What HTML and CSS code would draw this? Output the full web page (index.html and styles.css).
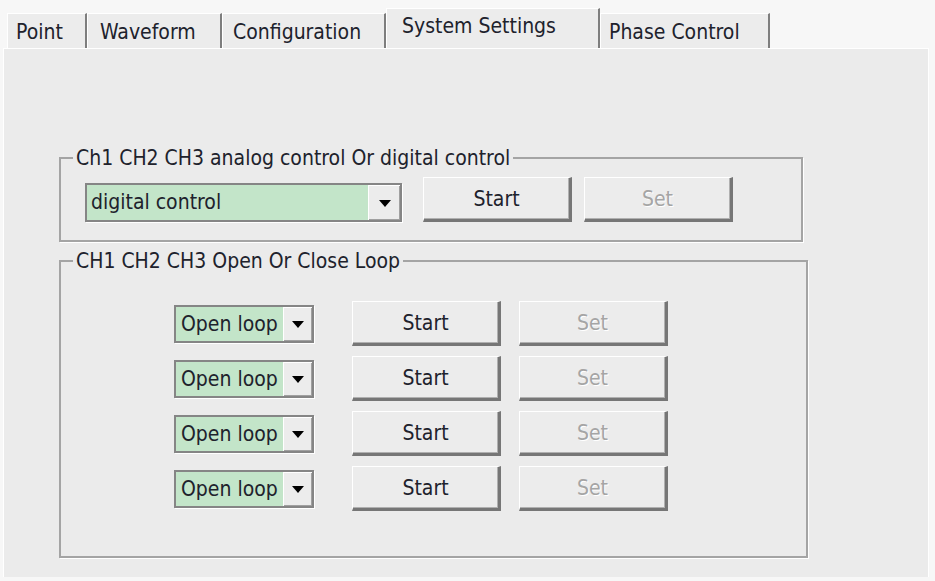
FILE: index.html
```
<!DOCTYPE html>
<html lang="en">

<head>
    <meta charset="UTF-8">
    <title>System Settings</title>
    <link rel="stylesheet" href="styles.css">
</head>

<body>
    <div class="window">
        <div class="tabs">
            <div class="tab tab-point">Point</div>
            <div class="tab tab-wave">Waveform</div>
            <div class="tab tab-config">Configuration</div>
            <div class="tab tab-system active">System Settings</div>
            <div class="tab tab-phase">Phase Control</div>
        </div>

        <div class="panel">
            <fieldset class="group group-mode">
                <legend>Ch1 CH2 CH3 analog control Or digital control</legend>
                <div class="mode-row">
                    <div class="combo combo-wide">
                        <span class="combo-text">digital control</span>
                        <span class="drop"><svg width="12" height="7" viewBox="0 0 12 7"><path d="M0 0H12L6 7Z" fill="#000"/></svg></span>
                    </div>
                    <button class="btn btn-start">Start</button>
                    <button class="btn" disabled>Set</button>
                </div>
            </fieldset>

            <fieldset class="group group-loop">
                <legend>CH1 CH2 CH3 Open Or Close Loop</legend>
                <div class="loop-list">
                    <div class="loop-row">
                        <div class="combo combo-small">
                            <span class="combo-text">Open loop</span>
                            <span class="drop"><svg width="12" height="7" viewBox="0 0 12 7"><path d="M0 0H12L6 7Z" fill="#000"/></svg></span>
                        </div>
                        <button class="btn btn-start">Start</button>
                        <button class="btn" disabled>Set</button>
                    </div>
                    <div class="loop-row">
                        <div class="combo combo-small">
                            <span class="combo-text">Open loop</span>
                            <span class="drop"><svg width="12" height="7" viewBox="0 0 12 7"><path d="M0 0H12L6 7Z" fill="#000"/></svg></span>
                        </div>
                        <button class="btn btn-start">Start</button>
                        <button class="btn" disabled>Set</button>
                    </div>
                    <div class="loop-row">
                        <div class="combo combo-small">
                            <span class="combo-text">Open loop</span>
                            <span class="drop"><svg width="12" height="7" viewBox="0 0 12 7"><path d="M0 0H12L6 7Z" fill="#000"/></svg></span>
                        </div>
                        <button class="btn btn-start">Start</button>
                        <button class="btn" disabled>Set</button>
                    </div>
                    <div class="loop-row">
                        <div class="combo combo-small">
                            <span class="combo-text">Open loop</span>
                            <span class="drop"><svg width="12" height="7" viewBox="0 0 12 7"><path d="M0 0H12L6 7Z" fill="#000"/></svg></span>
                        </div>
                        <button class="btn btn-start">Start</button>
                        <button class="btn" disabled>Set</button>
                    </div>
                </div>
            </fieldset>
        </div>
    </div>
</body>

</html>
```
FILE: styles.css
```
body {
    margin: 0;
    background-color: #f7f7f7;
    font-family: "DejaVu Sans Condensed", "DejaVu Sans", sans-serif;
    font-size: 21px;
    color: #20222c;
}

.window {
    padding: 8px 0 0 3px;
}

/* tab strip */
.tabs {
    display: flex;
    align-items: flex-end;
    height: 40px;
    padding-left: 4px;
}

.tab {
    height: 35px;
    box-sizing: border-box;
    padding-left: 8px;
    line-height: 36px;
    white-space: nowrap;
    background-color: #ececec;
    border-top: 1px solid #fff;
    border-left: 1px solid #fff;
    border-right: 2px solid #7e7e7e;
}

.tab.active {
    height: 40px;
    line-height: 34px;
    padding-left: 15px;
}

.tab-point { width: 80px; }
.tab-wave { width: 135px; padding-left: 12px; }
.tab-config { width: 164px; padding-left: 10px; }
.tab-system { width: 214px; }
.tab-phase { width: 170px; padding-left: 8px; }

/* main page */
.panel {
    width: 926px;
    height: 529px;
    box-sizing: border-box;
    padding: 97px 0 0 55px;
    background-color: #ebebeb;
    border-top: 1px solid #fff;
    border-left: 1px solid #fff;
    border-right: 1px solid #fff;
}

.group {
    margin: 0;
    padding: 0;
    min-width: 0;
    box-sizing: border-box;
    border: 2px solid #a4a4a4;
    box-shadow: 1px 1px 0 #fff;
}

.group legend {
    margin-left: 12px;
    padding: 0 3px;
    line-height: 24px;
}

.group-mode {
    width: 744px;
}

.group-loop {
    width: 749px;
    margin-top: 7px;
}

.mode-row,
.loop-row {
    display: flex;
    align-items: center;
}

.mode-row {
    padding: 7px 0 18px 24px;
}

.loop-list {
    display: flex;
    flex-direction: column;
    gap: 10px;
    padding: 28px 0 45px 113px;
}

/* combo boxes */
.combo {
    display: flex;
    box-sizing: border-box;
    background-color: #c3e5c9;
    border: 2px solid #858585;
    box-shadow: 1px 1px 0 #fff;
}

.combo-wide {
    width: 317px;
    height: 39px;
    margin-top: 6px;
    margin-right: 21px;
}

.combo-small {
    width: 140px;
    height: 38px;
    margin-right: 38px;
}

.combo-text {
    flex: 1;
    padding-left: 4px;
    line-height: 34px;
    white-space: nowrap;
    overflow: hidden;
}

.combo-small .combo-text {
    padding-left: 5px;
}

.drop {
    width: 31px;
    display: flex;
    align-items: center;
    justify-content: center;
    background-color: #ececec;
    border-left: 1px solid #fff;
    border-top: 1px solid #fff;
    box-shadow: inset -1px -1px 0 #a0a0a0;
}

.combo-small .drop {
    width: 28px;
}

/* push buttons */
.btn {
    width: 149px;
    height: 45px;
    padding: 0;
    font-family: inherit;
    font-size: 21px;
    color: #20222c;
    background-color: #ececec;
    border-style: solid;
    border-width: 1px 3px 3px 1px;
    border-color: #fff #767676 #767676 #fff;
    box-shadow: inset -1px -1px 0 #b0b0b0;
}

.btn-start {
    margin-right: 12px;
}

.loop-row .btn-start {
    margin-right: 18px;
}

.btn:disabled {
    color: #a5a5a5;
    text-shadow: 1px 1px 0 #fff;
}
```
